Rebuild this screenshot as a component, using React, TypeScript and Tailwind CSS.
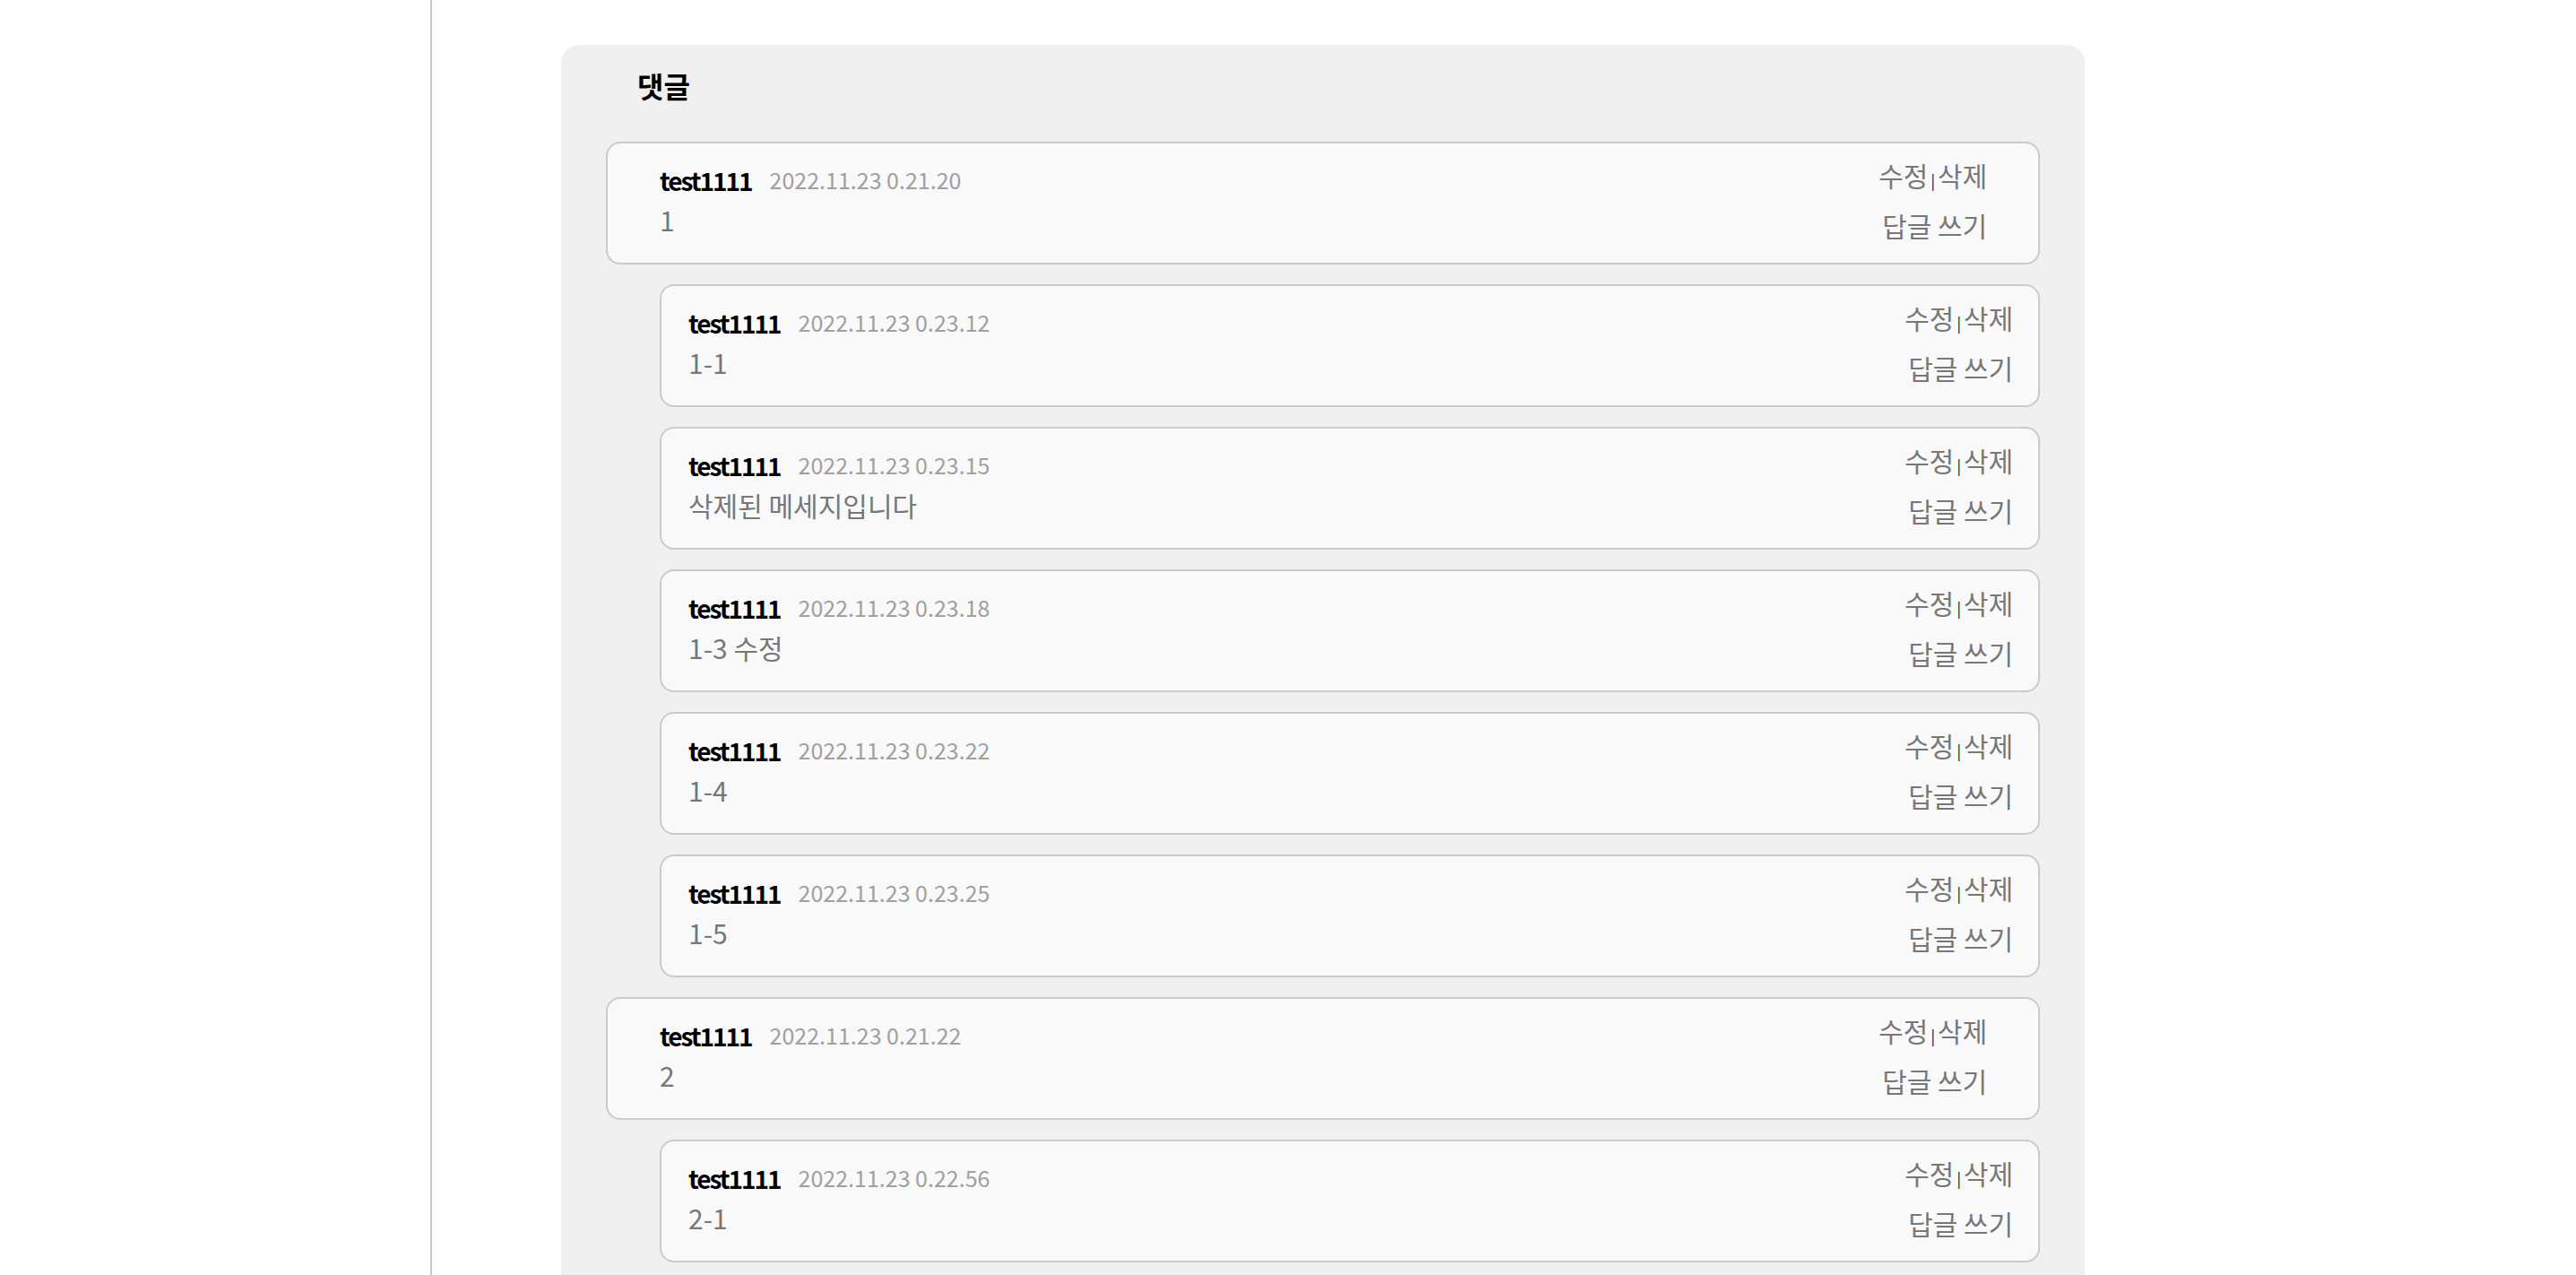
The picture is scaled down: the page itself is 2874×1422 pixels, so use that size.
import React from "react";

type Reply = {
  id: number;
  author: string;
  date: string;
  body: string;
  depth: 0 | 1;
};

const comments: Reply[] = [
  { id: 1, author: "test1111", date: "2022.11.23 0.21.20", body: "1", depth: 0 },
  { id: 2, author: "test1111", date: "2022.11.23 0.23.12", body: "1-1", depth: 1 },
  { id: 3, author: "test1111", date: "2022.11.23 0.23.15", body: "삭제된 메세지입니다", depth: 1 },
  { id: 4, author: "test1111", date: "2022.11.23 0.23.18", body: "1-3 수정", depth: 1 },
  { id: 5, author: "test1111", date: "2022.11.23 0.23.22", body: "1-4", depth: 1 },
  { id: 6, author: "test1111", date: "2022.11.23 0.23.25", body: "1-5", depth: 1 },
  { id: 7, author: "test1111", date: "2022.11.23 0.21.22", body: "2", depth: 0 },
  { id: 8, author: "test1111", date: "2022.11.23 0.22.56", body: "2-1", depth: 1 },
];

function CommentCard({ c }: { c: Reply }) {
  const nested = c.depth === 1;
  return (
    <div
      className={
        nested
          ? "ml-[60px] flex h-[137px] shrink-0 justify-between rounded-[16px] border-2 border-[#cbcbcb] bg-[#f9f9f9] pl-[30px] pr-[28px] pt-[18px]"
          : "flex h-[137px] shrink-0 justify-between rounded-[16px] border-2 border-[#cbcbcb] bg-[#f9f9f9] pl-[58px] pr-[57px] pt-[18px]"
      }
    >
      <div className="flex flex-col">
        <div className="flex h-[46px] items-center gap-[20px]">
          <span className="text-[28px] font-bold tracking-[-2px] text-black">{c.author}</span>
          <span className="text-[25px] text-[#a0a0a0]">{c.date}</span>
        </div>
        <p className="text-[30px] leading-[42px] text-[#777]">{c.body}</p>
      </div>
      <div className="flex flex-col items-end gap-[16px] text-[30px] leading-[34px] text-[#777]">
        <div>
          <button type="button">수정</button>
          <span className="mx-[3px] text-[17px] text-black">|</span>
          <button type="button">삭제</button>
        </div>
        <button type="button">답글 쓰기</button>
      </div>
    </div>
  );
}

export default function App() {
  return (
    <div className="flex h-[1422px] overflow-hidden bg-white font-['Noto_Sans_CJK_KR','Noto_Sans',sans-serif]">
      {/* left nav column, empty here */}
      <aside className="w-[482px] shrink-0 border-r-2 border-[#c8c8c8]" />

      <main className="pl-[144px] pt-[50px]">
        <section className="flex h-full w-[1700px] flex-col rounded-t-[20px] bg-[#f0f0f0] px-[50px] pt-[25px]">
          <h2 className="mb-[43px] ml-[35px] text-[32px] font-bold leading-[40px] text-black">댓글</h2>
          <div className="flex flex-col gap-[22px]">
            {comments.map((c) => (
              <CommentCard key={c.id} c={c} />
            ))}
          </div>
        </section>
      </main>
    </div>
  );
}
